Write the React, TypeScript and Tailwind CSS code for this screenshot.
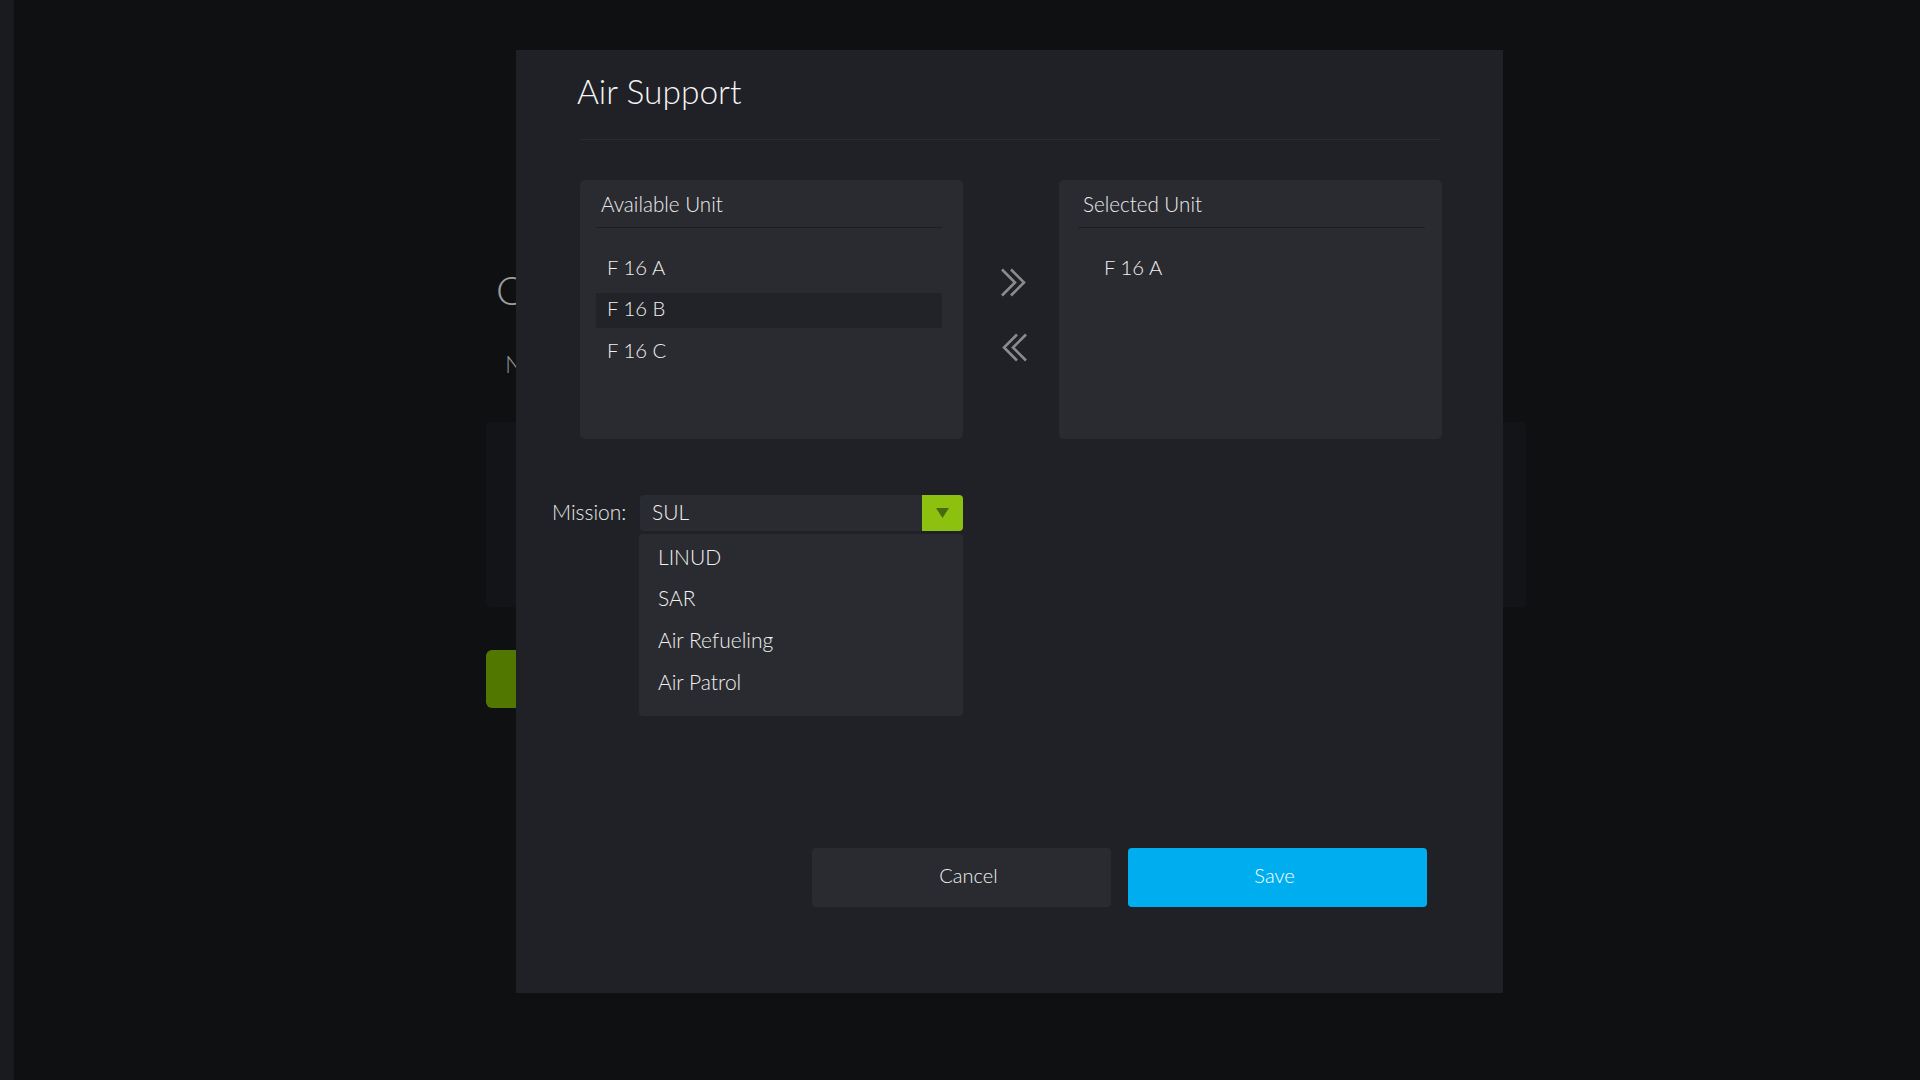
import React from "react";

const availableUnits = ["F 16 A", "F 16 B", "F 16 C"];
const selectedUnits = ["F 16 A"];
const missions = ["LINUD", "SAR", "Air Refueling", "Air Patrol"];

function DoubleChevron({ left = false }: { left?: boolean }) {
  return (
    <svg
      width="28"
      height="29"
      viewBox="0 0 28 29"
      fill="none"
      stroke="#8b8b8d"
      strokeWidth="2.6"
      className={left ? "-scale-x-100" : ""}
    >
      <path d="M2 1.5 L15 14.5 L2 27.5" />
      <path d="M11 1.5 L24 14.5 L11 27.5" />
    </svg>
  );
}

interface UnitPanelProps {
  title: string;
  items: string[];
  activeIndex?: number;
  // the two lists in the original are not padded the same way
  headerPad: string;
  bodyInset: string;
  itemPad: string;
}

function UnitPanel({ title, items, activeIndex, headerPad, bodyInset, itemPad }: UnitPanelProps) {
  return (
    <div className="flex h-[259px] w-[383px] flex-col rounded-[5px] bg-[#2a2b30] pt-[12px]">
      <div className={`h-[24px] text-[20.6px] leading-[24px] font-light text-[#ececec] ${headerPad}`}>{title}</div>
      <div className={`mt-[11px] h-px bg-[#1d1e22] ${bodyInset}`} />
      <ul className={`mt-[23.5px] flex flex-col gap-[6.5px] ${bodyInset}`}>
        {items.map((item, i) => (
          <li
            key={item}
            className={`flex h-[35px] items-center pb-[4px] text-[20.3px] font-light text-[#f0f0f0] ${itemPad} ${
              i === activeIndex ? "bg-[#222328]" : ""
            }`}
          >
            {item}
          </li>
        ))}
      </ul>
    </div>
  );
}

export default function App() {
  return (
    <div className="relative h-[1080px] w-[1920px] overflow-hidden bg-[#0f1012] font-['Lato','Open_Sans',sans-serif]">
      {/* page behind the dialog */}
      <div className="flex h-full">
        <aside className="w-[14px] bg-[#1a1b1e]" />
        <main className="flex w-[1040px] flex-col pl-[472px] pt-[266px]">
          <h1 className="pl-[10px] text-[40px] leading-[48px] font-light text-[#9c9c9c]">Create Operation</h1>
          <p className="mt-[35px] pl-[19px] text-[24px] leading-[29px] font-light text-[#8f8f8f]">Name</p>
          <div className="mt-[44px] h-[185px] w-[1040px] rounded-[4px] bg-[#131417]" />
          <button className="mt-[43px] h-[58px] w-[200px] rounded-[6px] bg-[#527700]" />
        </main>
      </div>

      {/* dialog */}
      <div className="absolute left-[516px] top-[50px] flex h-[943px] w-[987px] flex-col bg-[#202126] pl-[64px] pr-[61px] pt-[19.5px]">
        <h2 className="-ml-[3px] text-[33.5px] leading-[42px] font-light text-[#f4f4f4]">Air Support</h2>
        <div className="ml-px mr-[2px] mt-[27.5px] h-px bg-[#2b2c31]" />

        <div className="mt-[40px] flex">
          <UnitPanel
            title="Available Unit"
            items={availableUnits}
            activeIndex={1}
            headerPad="pl-[21px]"
            bodyInset="ml-[16px] mr-[21px]"
            itemPad="pl-[11px]"
          />
          <div className="flex w-[96px] flex-col items-center gap-[36px] pl-[6px] pt-[88px]">
            <button>
              <DoubleChevron />
            </button>
            <button>
              <DoubleChevron left />
            </button>
          </div>
          <UnitPanel
            title="Selected Unit"
            items={selectedUnits}
            headerPad="pl-[24px]"
            bodyInset="ml-[19px] mr-[17px]"
            itemPad="pl-[26px]"
          />
        </div>

        <div className="-ml-[28px] mt-[56px] flex items-center">
          <label className="w-[88px] pb-[2px] text-[21px] leading-[24px] font-light text-[#e8e8e8]">Mission:</label>
          <div className="relative">
            <div className="flex h-[36px] w-[323px] items-center rounded-[4px] bg-[#2a2b30]">
              <span className="flex-1 pb-[2px] pl-[12px] text-[21px] font-light text-[#f0f0f0]">SUL</span>
              <span className="flex h-full w-[41px] items-center justify-center rounded-r-[4px] bg-[#8cc20f]">
                <svg width="13" height="10" viewBox="0 0 13 10">
                  <polygon points="0,0 13,0 6.5,10" fill="#4b6a0c" />
                </svg>
              </span>
            </div>
            <ul className="absolute left-[-1px] top-[39px] flex h-[182px] w-[324px] flex-col gap-[6.67px] rounded-[4px] bg-[#2a2b30] pt-[5px]">
              {missions.map((m) => (
                <li key={m} className="flex h-[35px] items-center pl-[19px] text-[21px] font-light text-[#f0f0f0]">
                  {m}
                </li>
              ))}
            </ul>
          </div>
        </div>

        <div className="mb-[86px] mt-auto flex justify-end gap-[17px] pr-[15px]">
          <button className="h-[59px] w-[299px] rounded-[4px] bg-[#2a2b30] pb-[5px] pl-[14px] text-[20px] font-light text-[#f0f0f0]">
            Cancel
          </button>
          <button className="h-[59px] w-[299px] rounded-[4px] bg-[#00aeef] pb-[5px] pr-[6px] text-[20px] font-light text-white">
            Save
          </button>
        </div>
      </div>
    </div>
  );
}
